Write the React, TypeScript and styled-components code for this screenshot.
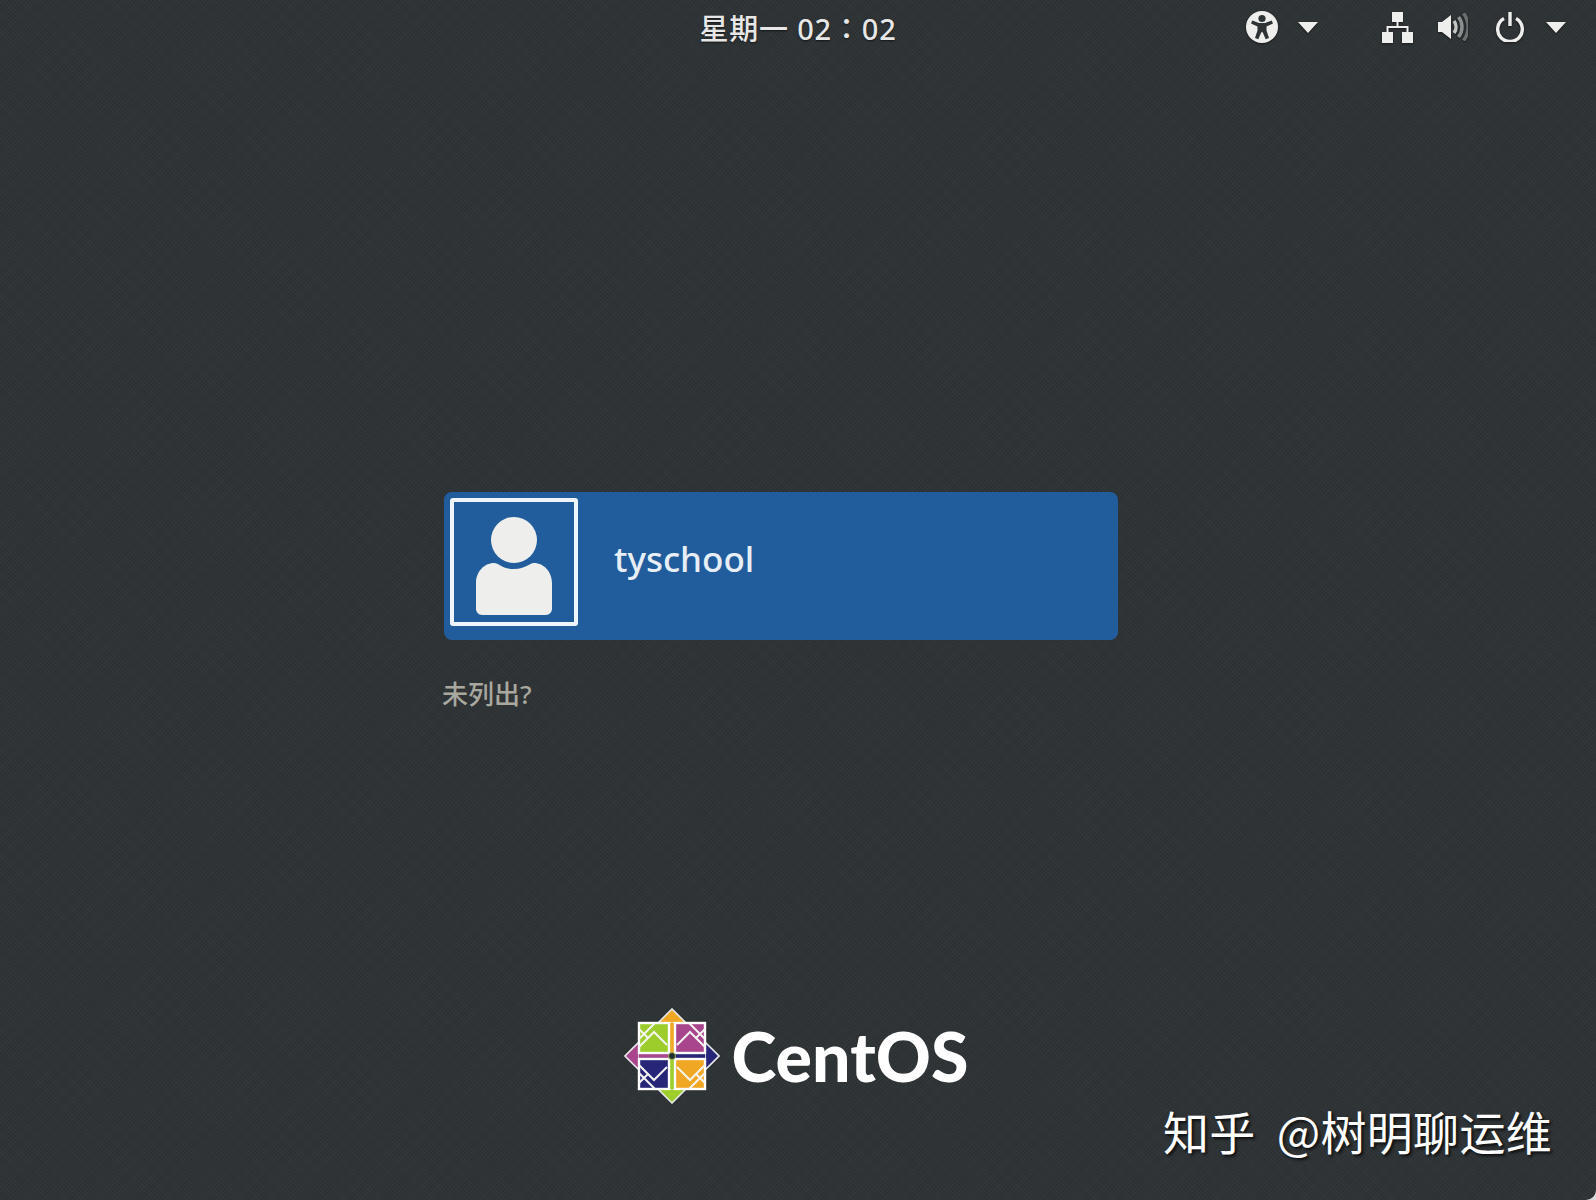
import styled, { createGlobalStyle } from "styled-components";

const GlobalStyle = createGlobalStyle`
  html, body {
    margin: 0;
    padding: 0;
    background: #d8dadb;
  }
`;

const CJK = `"Noto Sans", "Noto Sans CJK SC", sans-serif`;

const Screen = styled.div`
  position: relative;
  display: flex;
  flex-direction: column;
  width: 1596px;
  height: 1200px;
  overflow: hidden;
  border-radius: 0 0 10px 0;
  font-family: ${CJK};
  background-color: #2f3437;
  background-image:
    repeating-linear-gradient(45deg, rgba(255, 255, 255, 0.012) 0 1px, rgba(0, 0, 0, 0.03) 1px 3px),
    repeating-linear-gradient(-45deg, rgba(255, 255, 255, 0.012) 0 1px, rgba(0, 0, 0, 0.03) 1px 3px);
`;

const TopBar = styled.header`
  display: grid;
  grid-template-columns: 1fr auto 1fr;
  align-items: center;
  height: 54px;
  padding: 0 30px;
`;

const Clock = styled.div`
  grid-column: 2;
  margin-top: 4px;
  font-family: "Noto Sans", "Noto Sans CJK JP", sans-serif;
  font-size: 29px;
  font-weight: 500;
  line-height: 40px;
  letter-spacing: 0.8px;
  color: #e6e7e6;
  white-space: nowrap;
  text-shadow: 0 1px 2px rgba(0, 0, 0, 0.6);
`;

const Indicators = styled.div`
  grid-column: 3;
  display: flex;
  justify-content: flex-end;
  align-items: center;
`;

const Group = styled.div<{ $gap: number; $after?: number }>`
  display: flex;
  align-items: center;
  gap: ${(p) => p.$gap}px;
  margin-right: ${(p) => p.$after ?? 0}px;
`;

const Glyph = styled.svg`
  display: block;
  flex: none;
  filter: drop-shadow(0 1px 1px rgba(0, 0, 0, 0.5));
`;

const Main = styled.main`
  flex: 1;
  display: flex;
  flex-direction: column;
  align-items: flex-start;
  padding: 438px 0 0 444px;
`;

const UserCard = styled.div`
  display: flex;
  align-items: center;
  gap: 36px;
  box-sizing: border-box;
  width: 674px;
  height: 148px;
  padding: 0 6px 8px;
  border-radius: 8px;
  background: #215d9c;
`;

const Avatar = styled.div`
  display: flex;
  align-items: center;
  justify-content: center;
  box-sizing: border-box;
  width: 128px;
  height: 128px;
  padding-top: 8px;
  border: 4px solid #eef4f9;
  border-radius: 3px;
`;

const UserName = styled.div`
  margin-bottom: 6px;
  font-size: 35px;
  line-height: 44px;
  font-weight: 500;
  color: #e7eef5;
`;

const NotListed = styled.div`
  margin: 38px 0 0 -2px;
  font-size: 26px;
  font-weight: 500;
  line-height: 32px;
  color: #a8a89f;
`;

const Footer = styled.footer`
  display: flex;
  justify-content: center;
  align-items: center;
  gap: 12px;
  padding: 0 4px 96px 0;
`;

const Wordmark = styled.div`
  font-family: "Lato", "Liberation Sans", sans-serif;
  font-weight: 900;
  font-size: 68px;
  line-height: 96px;
  color: #ffffff;
`;

const Watermark = styled.div`
  position: absolute;
  right: 44px;
  bottom: 40px;
  font-family: "Noto Sans CJK SC", sans-serif;
  font-size: 46px;
  line-height: 60px;
  letter-spacing: 0.3px;
  color: #ffffff;
  white-space: pre;
  text-shadow: 2px 2px 3px rgba(0, 0, 0, 0.75);
`;

const Caret = () => (
  <Glyph width="20" height="11" viewBox="0 0 20 11">
    <path d="M0 0h20L10 11z" fill="#eeeeec" />
  </Glyph>
);

const AccessibilityIcon = () => (
  <Glyph width="32" height="32" viewBox="0 0 32 32">
    <circle cx="16" cy="16" r="16" fill="#eeeeec" />
    <circle cx="16" cy="7.500" r="3.600" fill="#2e3336" />
    <path
      d="M5 12.500l1.300-3 6.700 2.500h6l6.700-2.500 1.300 3-6.500 3v4l2.500 7.500-3.300 1.200-3-7h-1.400l-3 7-3.300-1.200 2.500-7.500v-4z"
      fill="#2e3336"
    />
  </Glyph>
);

const NetworkIcon = () => (
  <Glyph width="31" height="31" viewBox="0 0 31 31">
    <path d="M10 0h11v10h-11zM0 20h11v11h-11zM20 20h11v11h-11z" fill="#eeeeec" />
    <path d="M15.500 10v5M5.500 20v-5h20v5" fill="none" stroke="#eeeeec" strokeWidth="2" />
  </Glyph>
);

const VolumeIcon = () => (
  <Glyph width="30" height="28" viewBox="0 0 30 28">
    <path d="M0 9h4l9-7v24l-9-7h-4z" fill="#eeeeec" />
    <path d="M16 8a10 10 0 0 1 0 12" fill="none" stroke="#c4c6c4" strokeWidth="3.500" />
    <path d="M20.500 4a16 16 0 0 1 0 20" fill="none" stroke="#8b8e8e" strokeWidth="3.500" />
    <path d="M25.500 0.500a22 22 0 0 1 0 27" fill="none" stroke="#6a6e6f" strokeWidth="3.500" />
  </Glyph>
);

const PowerIcon = () => (
  <Glyph width="28" height="30" viewBox="0 0 28 30">
    <path d="M8 6.500a12.300 12.300 0 1 0 12 0" fill="none" stroke="#eeeeec" strokeWidth="3.400" />
    <path d="M14 0v14" fill="none" stroke="#eeeeec" strokeWidth="3.400" />
  </Glyph>
);

const UserIcon = () => (
  <svg width="76" height="98" viewBox="0 0 76 98">
    <circle cx="38" cy="23" r="23" fill="#eeeeec" />
    <path
      d="M18 46c5 0 8 6 20 6s15-6 20-6c10 0 18 9 18 20v26c0 3-3 6-6 6h-64c-3 0-6-3-6-6v-26c0-11 8-20 18-20z"
      fill="#eeeeec"
    />
  </svg>
);

const quarters = [
  { square: "#a8458c", tip: "#efa724", sx: 1, sy: 1 },
  { square: "#efa724", tip: "#262577", sx: 1, sy: -1 },
  { square: "#262577", tip: "#9ccd2a", sx: -1, sy: -1 },
  { square: "#9ccd2a", tip: "#a8458c", sx: -1, sy: 1 },
];

// colours turn round the centre, the white lines mirror across both axes
const CentosLogo = () => (
  <svg width="96" height="96" viewBox="-48 -48 96 96">
    {quarters.map((q, i) => (
      <g key={q.tip} transform={`rotate(${i * 90})`}>
        <path d="M-14 -33L0 -47L14 -33z" fill={q.tip} stroke="#e8e8e8" strokeWidth="1.600" />
        <rect x="-3.500" y="-33" width="7" height="30" fill={q.tip} />
      </g>
    ))}
    {quarters.map((q, i) => (
      <g key={q.square} transform={`rotate(${i * 90})`}>
        <rect x="3" y="-33" width="30" height="30" fill={q.square} stroke="#ffffff" strokeWidth="2.400" />
      </g>
    ))}
    {quarters.map((q) => (
      <path
        key={q.sx * 2 + q.sy}
        transform={`scale(${q.sx} ${q.sy})`}
        d="M17 -33L33 -17M5 -11L18 -24L33 -9M24 -18L33 -27"
        fill="none"
        stroke="#f4f4f0"
        strokeWidth="2"
      />
    ))}
    <circle cx="0" cy="0" r="3.500" fill="#20302c" stroke="#9db06a" strokeWidth="1" />
  </svg>
);

export default function App() {
  return (
    <>
      <GlobalStyle />
      <Screen>
        <TopBar>
          <Clock>星期一 02：02</Clock>
          <Indicators>
            <Group $gap={20} $after={64}>
              <AccessibilityIcon />
              <Caret />
            </Group>
            <Group $gap={25} $after={28}>
              <NetworkIcon />
              <VolumeIcon />
            </Group>
            <Group $gap={22}>
              <PowerIcon />
              <Caret />
            </Group>
          </Indicators>
        </TopBar>
        <Main>
          <UserCard>
            <Avatar>
              <UserIcon />
            </Avatar>
            <UserName>tyschool</UserName>
          </UserCard>
          <NotListed>未列出?</NotListed>
        </Main>
        <Footer>
          <CentosLogo />
          <Wordmark>CentOS</Wordmark>
        </Footer>
        <Watermark>{"知乎  @树明聊运维"}</Watermark>
      </Screen>
    </>
  );
}
